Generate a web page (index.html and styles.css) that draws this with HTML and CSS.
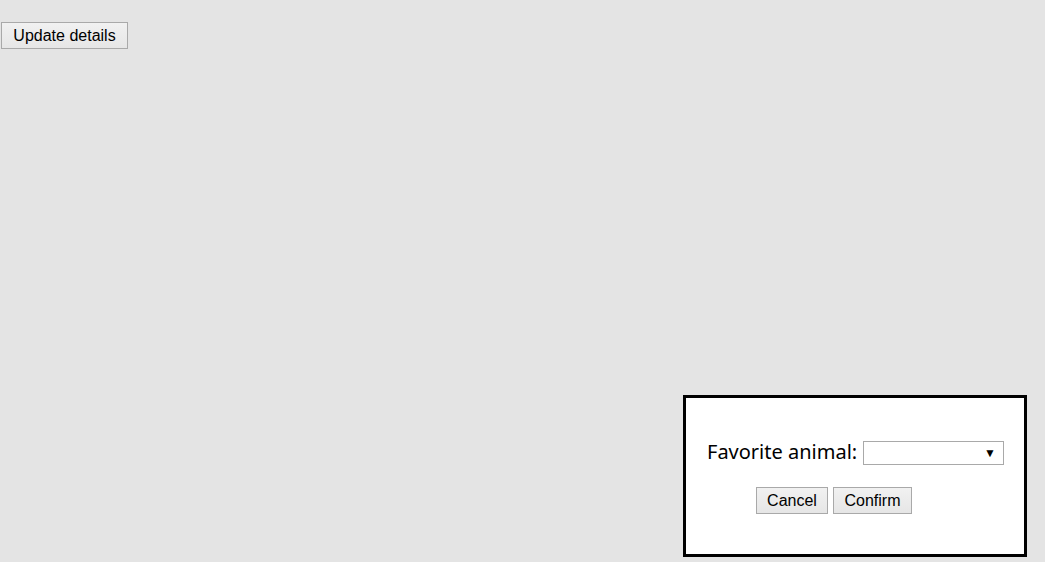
FILE: index.html
```html
<!DOCTYPE html>
<html>
<head>
<meta charset="utf-8">
<link rel="stylesheet" href="styles.css">
</head>
<body>
<button class="btn btn-main">Update details</button>
<div class="dialog">
  <div class="field">
    <label class="label">Favorite animal:</label>
    <div class="select"><span class="arrow">▼</span></div>
  </div>
  <div class="actions">
    <button class="btn">Cancel</button>
    <button class="btn">Confirm</button>
  </div>
</div>
</body>
</html>
```
FILE: styles.css
```css
html, body {
  margin: 0;
  height: 100%;
}
body {
  background: #e4e4e4;
  padding: 22px 0 0 1px;
  box-sizing: border-box;
  font-family: "Liberation Sans", Arial, sans-serif;
}
.btn {
  font-family: "Liberation Sans", Arial, sans-serif;
  font-size: 16px;
  color: #000;
  height: 27px;
  padding: 0 10px;
  margin: 0;
  border: 1px solid #a9a9a9;
  border-radius: 0;
  background: linear-gradient(#f1f1f1, #e6e6e6);
  line-height: 25px;
  box-sizing: border-box;
}
.btn-main {
  width: 127px;
}
.dialog {
  position: fixed;
  right: 18px;
  bottom: 5px;
  width: 344px;
  height: 162px;
  box-sizing: border-box;
  border: 3px solid #000;
  background: #fff;
  padding: 43px 20px 0 21px;
  display: flex;
  flex-direction: column;
}
.field {
  display: flex;
  align-items: center;
  justify-content: space-between;
  height: 24px;
}
.label {
  font-family: "Noto Sans", "Open Sans", sans-serif;
  font-size: 20px;
  color: #000;
  line-height: 24px;
  position: relative;
  top: -1px;
}
.select {
  width: 141px;
  height: 24px;
  box-sizing: border-box;
  border: 1px solid #a9a9a9;
  background: #fff;
  display: flex;
  align-items: center;
  justify-content: flex-end;
  padding-right: 7px;
}
.arrow {
  font-size: 12px;
  color: #000;
  line-height: 1;
}
.actions {
  display: flex;
  gap: 5px;
  margin-top: 22px;
  padding-left: 49px;
}
.actions .btn:first-child { width: 72px; }
.actions .btn:last-child { width: 79px; }
```
